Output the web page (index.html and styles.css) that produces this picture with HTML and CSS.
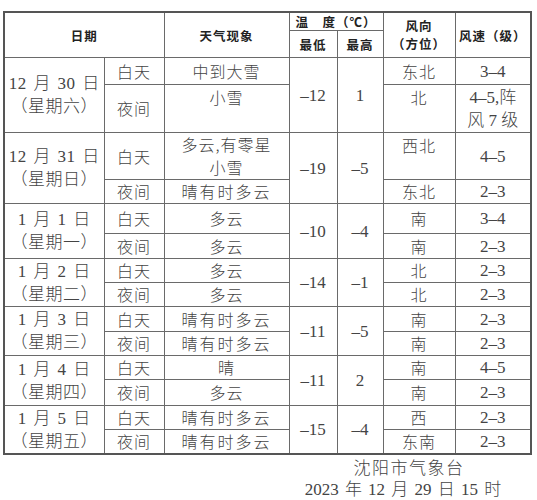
FILE: index.html
```html
<!DOCTYPE html>
<html lang="zh">
<head>
<meta charset="utf-8">
<link rel="stylesheet" href="styles.css">
</head>
<body>
<div class="page">
<table class="wx">
<colgroup>
<col class="c-date"><col class="c-part"><col class="c-wx"><col class="c-lo"><col class="c-hi"><col class="c-dir"><col class="c-spd">
</colgroup>
<thead>
<tr class="h1">
<th rowspan="2" colspan="2">日期</th>
<th rowspan="2">天气现象</th>
<th colspan="2" class="temp">温　度（℃）</th>
<th rowspan="2" class="dir">风向<br>（方位）</th>
<th rowspan="2">风速（级）</th>
</tr>
<tr class="h2">
<th>最低</th>
<th>最高</th>
</tr>
</thead>
<tbody>
<tr class="r27">
<td rowspan="2" class="date">12 月 30 日<br>（星期六）</td>
<td class="part">白天</td>
<td class="cn">中到大雪</td>
<td rowspan="2" class="num">–12</td>
<td rowspan="2" class="num">1</td>
<td class="cn">东北</td>
<td class="num">3–4</td>
</tr>
<tr class="r48">
<td class="part">夜间</td>
<td class="cn top">小雪</td>
<td class="cn top">北</td>
<td class="num two">4–5,阵<br>风 7 级</td>
</tr>
<tr class="r47">
<td rowspan="2" class="date">12 月 31 日<br>（星期日）</td>
<td class="part">白天</td>
<td class="cn two">多云,有零星<br>小雪</td>
<td rowspan="2" class="num">–19</td>
<td rowspan="2" class="num">–5</td>
<td class="cn top">西北</td>
<td class="num">4–5</td>
</tr>
<tr class="r24">
<td class="part">夜间</td>
<td class="cn wide">晴有时多云</td>
<td class="cn">东北</td>
<td class="num">2–3</td>
</tr>
<tr class="r30">
<td rowspan="2" class="date">1 月 1 日<br>（星期一）</td>
<td class="part">白天</td>
<td class="cn">多云</td>
<td rowspan="2" class="num">–10</td>
<td rowspan="2" class="num">–4</td>
<td class="cn">南</td>
<td class="num">3–4</td>
</tr>
<tr class="r25">
<td class="part">夜间</td>
<td class="cn">多云</td>
<td class="cn">南</td>
<td class="num">2–3</td>
</tr>
<tr class="r24">
<td rowspan="2" class="date">1 月 2 日<br>（星期二）</td>
<td class="part">白天</td>
<td class="cn">多云</td>
<td rowspan="2" class="num">–14</td>
<td rowspan="2" class="num">–1</td>
<td class="cn">北</td>
<td class="num">2–3</td>
</tr>
<tr class="r24">
<td class="part">夜间</td>
<td class="cn">多云</td>
<td class="cn">北</td>
<td class="num">2–3</td>
</tr>
<tr class="r25">
<td rowspan="2" class="date">1 月 3 日<br>（星期三）</td>
<td class="part">白天</td>
<td class="cn wide">晴有时多云</td>
<td rowspan="2" class="num">–11</td>
<td rowspan="2" class="num">–5</td>
<td class="cn">南</td>
<td class="num">2–3</td>
</tr>
<tr class="r24">
<td class="part">夜间</td>
<td class="cn wide">晴有时多云</td>
<td class="cn">南</td>
<td class="num">2–3</td>
</tr>
<tr class="r24">
<td rowspan="2" class="date">1 月 4 日<br>（星期四）</td>
<td class="part">白天</td>
<td class="cn">晴</td>
<td rowspan="2" class="num">–11</td>
<td rowspan="2" class="num">2</td>
<td class="cn">南</td>
<td class="num">4–5</td>
</tr>
<tr class="r26">
<td class="part">夜间</td>
<td class="cn">多云</td>
<td class="cn">南</td>
<td class="num">2–3</td>
</tr>
<tr class="r24">
<td rowspan="2" class="date">1 月 5 日<br>（星期五）</td>
<td class="part">白天</td>
<td class="cn wide">晴有时多云</td>
<td rowspan="2" class="num">–15</td>
<td rowspan="2" class="num">–4</td>
<td class="cn">西</td>
<td class="num">2–3</td>
</tr>
<tr class="r23">
<td class="part">夜间</td>
<td class="cn wide">晴有时多云</td>
<td class="cn">东南</td>
<td class="num">2–3</td>
</tr>
</tbody>
</table>
<div class="sign">
<div class="org">沈阳市气象台</div>
<div class="when">2023 年 12 月 29 日 15 时</div>
</div>
</div>
</body>
</html>
```
FILE: styles.css
```css
html, body {
  margin: 0;
  padding: 0;
  background: #fff;
}
.page {
  padding: 11px 0 0 3px;
  font-family: "Liberation Serif", "Noto Sans CJK SC", serif;
  color: #444;
}
.wx {
  width: 527px;
  border-collapse: collapse;
  table-layout: fixed;
  border: 2px solid #555;
}
.c-date { width: 100px; }
.c-part { width: 60px; }
.c-wx { width: 125px; }
.c-lo { width: 48px; }
.c-hi { width: 46px; }
.c-dir { width: 72px; }
.c-spd { width: 76px; }
.wx th, .wx td {
  border: 1px solid #6a6a6a;
  padding: 0;
  text-align: center;
  vertical-align: middle;
  overflow: hidden;
  white-space: nowrap;
}
.wx th {
  font-family: "Noto Sans CJK SC", sans-serif;
  font-weight: 700;
  font-size: 12.5px;
  line-height: 17px;
  color: #222;
  letter-spacing: 1px;
}
.wx th.dir { line-height: 18px; }
.h1 { height: 18px; }
.h2 { height: 27px; }
.wx td {
  font-size: 17px;
  line-height: 23px;
  font-weight: 300;
}
.wx td.date {
  line-height: 23px;
  letter-spacing: 0.5px;
  word-spacing: 2px;
}
.wx td.part, .wx td.cn {
  font-family: "Noto Sans CJK SC", sans-serif;
  font-size: 16px;
  letter-spacing: 1px;
}
.wx td.wide { letter-spacing: 2px; }
.wx td.top { vertical-align: top; padding-top: 1px; }
.wx td.two { line-height: 23px; }
.r23 { height: 23px; }
.r24 { height: 24px; }
.r25 { height: 25px; }
.r26 { height: 26px; }
.r27 { height: 27px; }
.r30 { height: 30px; }
.r47 { height: 47px; }
.r48 { height: 48px; }
.sign {
  display: flex;
  flex-direction: column;
  align-items: center;
  width: 200px;
  margin-left: 300px;
  font-size: 17px;
  line-height: 23px;
  font-weight: 300;
}
.org {
  font-family: "Noto Sans CJK SC", sans-serif;
  font-size: 17px;
  letter-spacing: 1.5px;
  padding-left: 12px;
}
.when {
  word-spacing: 2px;
}
```
